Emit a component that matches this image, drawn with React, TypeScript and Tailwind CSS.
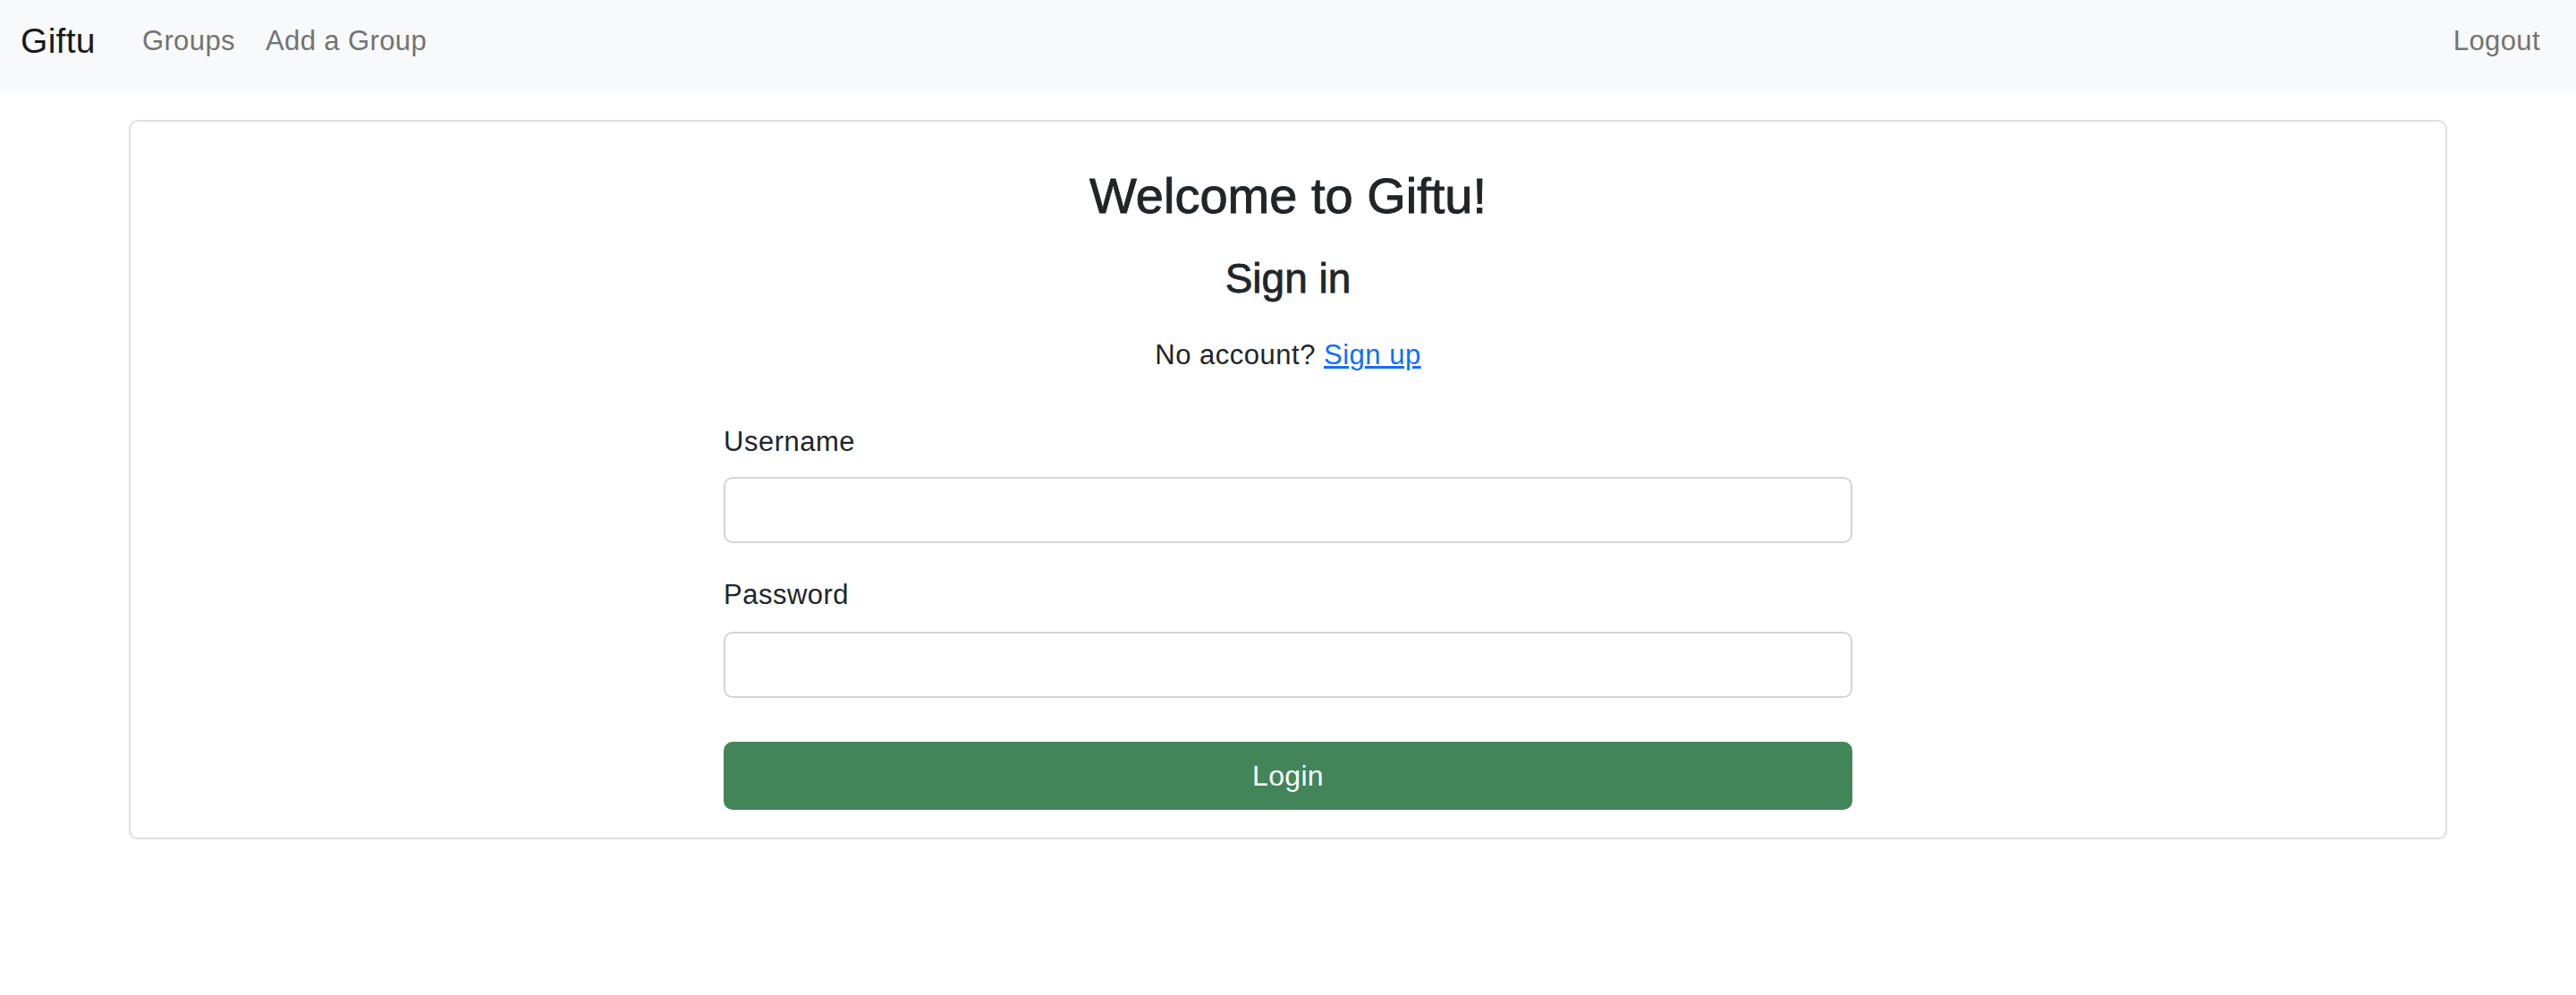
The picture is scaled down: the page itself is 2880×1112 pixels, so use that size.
import { useState } from "react";

export default function App() {
  const [username, setUsername] = useState("");
  const [password, setPassword] = useState("");

  const navLinks = [
    { href: "#groups", label: "Groups" },
    { href: "#add-group", label: "Add a Group" },
  ];

  return (
    <div className="min-h-screen bg-white font-['Liberation_Sans',Arial,sans-serif] text-[#212529]">
      {/* Navbar */}
      <nav className="bg-[#f8f9fa] h-[102px] pb-[9px] pl-[23px] pr-[40px] flex items-center justify-between">
        <div className="flex items-center">
          <a href="#" className="text-[39px] tracking-[0.3px] text-[#1a1a1a] mr-[52px]">
            Giftu
          </a>
          <div className="flex items-center gap-[34px]">
            {navLinks.map((link) => (
              <a key={link.href} href={link.href} className="text-[31px] tracking-[0.4px] text-[#737373]">
                {link.label}
              </a>
            ))}
          </div>
        </div>
        <a href="#logout" className="text-[31px] tracking-[0.4px] text-[#737373]">
          Logout
        </a>
      </nav>

      {/* Sign in card */}
      <div className="px-[144px] pt-[32px]">
        <div className="border-2 border-[#dfdfdf] rounded-[10px] pt-[49px] pb-[31px] text-center">
          <h2 className="text-[56px] leading-[1.2] font-medium [-webkit-text-stroke:0.9px_#212529]">
            Welcome to Giftu!
          </h2>
          <h3 className="text-[46px] leading-[1.2] font-medium mt-[32px] [-webkit-text-stroke:0.8px_#212529]">
            Sign in
          </h3>
          <p className="text-[31px] leading-[1.5] tracking-[0.5px] mt-[35px]">
            No account?{" "}
            <a href="#signup" className="text-[#0d6efd] underline">
              Sign up
            </a>
          </p>

          <form className="w-[1262px] mx-auto mt-[50px] text-left" onSubmit={(e) => e.preventDefault()}>
            <label className="block text-[31px] leading-[1.5] tracking-[0.5px]">Username</label>
            <input
              type="text"
              value={username}
              onChange={(e) => setUsername(e.target.value)}
              className="block w-full h-[74px] mt-[16px] border-2 border-[#d1d5da] rounded-[10px] px-[20px] text-[30px] outline-none"
            />
            <label className="block text-[31px] leading-[1.5] tracking-[0.5px] mt-[35px]">Password</label>
            <input
              type="password"
              value={password}
              onChange={(e) => setPassword(e.target.value)}
              className="block w-full h-[74px] mt-[17px] border-2 border-[#d1d5da] rounded-[10px] px-[20px] text-[30px] outline-none"
            />
            <button
              type="submit"
              className="block w-full h-[76px] mt-[49px] bg-[#418558] text-white text-[32px] tracking-[0.3px] rounded-[10px]"
            >
              Login
            </button>
          </form>
        </div>
      </div>
    </div>
  );
}
